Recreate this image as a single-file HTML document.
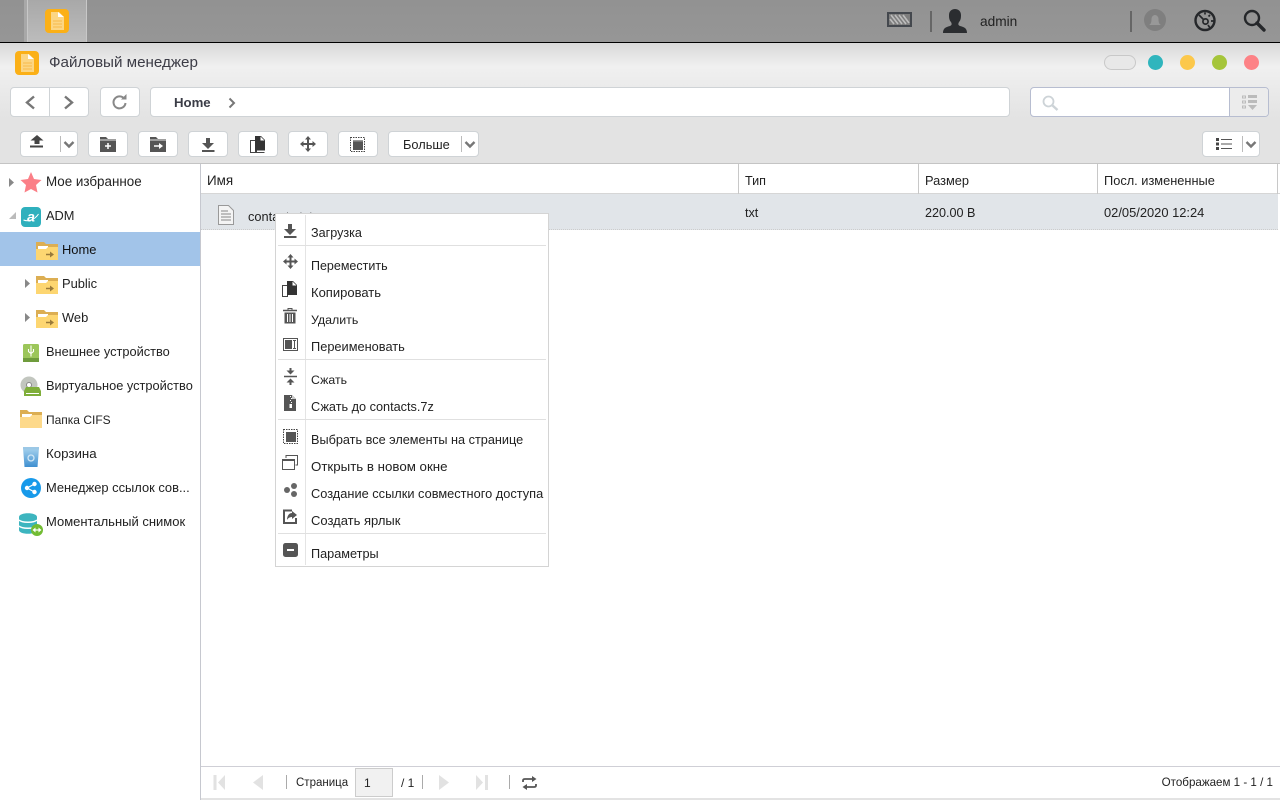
<!DOCTYPE html>
<html><head><meta charset="utf-8"><style>
*{box-sizing:border-box}
html,body{margin:0;padding:0;width:1280px;height:800px;overflow:hidden;background:#fff;font-family:"Liberation Sans","DejaVu Sans",sans-serif;font-size:12.6px;color:#222}
.a{position:absolute}
.t{position:absolute;white-space:nowrap;line-height:16px}
.btn{position:absolute;background:#fff;border:1px solid #cfd3d6;border-radius:4px}
svg{position:absolute;overflow:visible}
</style></head><body>
<!-- top bar -->
<div class="a" style="left:0;top:0;width:1280px;height:42px;background:linear-gradient(#929292,#969696)"></div>
<div class="a" style="left:24px;top:0;width:3px;height:42px;background:#a8a8a8"></div>
<div class="a" style="left:27px;top:0;width:60px;height:42px;background:linear-gradient(#a8a8a8,#bcbcbc);border-left:1px solid #c8c8c8;border-right:1px solid #c8c8c8"></div>
<svg style="left:45px;top:9px" width="24" height="25" viewBox="0 0 24 25"><rect width="24" height="24" rx="4" fill="#fbb017"/><path d="M6 3h8l5 5v13H6z" fill="#fcd684"/><path d="M13 3l6 5h-6z" fill="#fff"/><path d="M8 12h9M8 15h9M8 18h9" stroke="#f7bb4a"/></svg>
<svg style="left:887px;top:12px" width="26" height="15"><rect x="1" y="1" width="23" height="13" fill="#7e7e7e" stroke="#44484e" stroke-width="2"/><path d="M4 3l7 9M8 3l7 9M12 3l7 9M16 3l6 8M3 7l4 5" stroke="#bdbdbd" stroke-width="1.600"/></svg>
<div class="a" style="left:930px;top:11px;width:2px;height:21px;background:#666"></div>
<svg style="left:943px;top:9px" width="24" height="24"><path d="M0 24c0-5 3-6 7-7 2-1 2-2 1-4-2-2-2-5-2-7 0-4 3-6 6-6s6 2 6 6c0 2 0 5-2 7-1 2-1 3 1 4 4 1 7 2 7 7z" fill="#2b2d30"/></svg>
<div class="t" style="left:980px;top:14px;color:#222;font-size:13.7px">admin</div>
<div class="a" style="left:1130px;top:11px;width:2px;height:21px;background:#666"></div>
<svg style="left:1144px;top:9px" width="23" height="23"><circle cx="11" cy="11" r="11" fill="#7f7f7f"/><path d="M5 16c2-1 2.500-3 2.500-6 0-2 1.500-4 3.500-4s3.500 2 3.500 4c0 3 .5 5 2.500 6z" fill="#989898"/></svg>
<svg style="left:1194px;top:9px" width="23" height="23"><circle cx="11" cy="11.500" r="9.500" fill="none" stroke="#25272a" stroke-width="2.400"/><circle cx="11.500" cy="12.500" r="2.600" fill="none" stroke="#25272a" stroke-width="1.700"/><path d="M5 6l5 5M16 19l-2-3M17 12h2.500M11 3.500v2M16 6l-1.500 1.500" stroke="#25272a" stroke-width="1.700"/></svg>
<svg style="left:1243px;top:9px" width="24" height="23"><circle cx="9" cy="9" r="7" fill="none" stroke="#25272a" stroke-width="2.400"/><path d="M14 14l7 7" stroke="#25272a" stroke-width="3.400" stroke-linecap="round"/></svg>
<!-- window -->
<div class="a" style="left:0;top:42px;width:1280px;height:758px;border-top:1px solid #000;background:#e3e3e3"></div>
<div class="a" style="left:0;top:43px;width:1280px;height:75px;background:linear-gradient(#d8d8d8,#f0f0f0 32%,#e3e3e3)"></div>
<svg style="left:15px;top:51px" width="24" height="24" viewBox="0 0 24 24"><rect width="24" height="24" rx="4" fill="#fbb017"/><path d="M6 3h8l5 5v13H6z" fill="#fcd684"/><path d="M13 3l6 5h-6z" fill="#fff"/><path d="M8 12h9M8 15h9M8 18h9" stroke="#f7bb4a"/></svg>
<div class="t" style="left:49px;top:55px;font-size:15.2px;color:#3c3c46">Файловый менеджер</div>
<div class="a" style="left:1104px;top:55px;width:32px;height:15px;border:1px solid #c8c8c8;border-radius:8px;background:#e8e8e8"></div>
<div class="a" style="left:1148px;top:55px;width:15px;height:15px;border-radius:50%;background:#2fb5bd"></div>
<div class="a" style="left:1180px;top:55px;width:15px;height:15px;border-radius:50%;background:#fcc84b"></div>
<div class="a" style="left:1212px;top:55px;width:15px;height:15px;border-radius:50%;background:#a5c53a"></div>
<div class="a" style="left:1244px;top:55px;width:15px;height:15px;border-radius:50%;background:#fd8286"></div>
<!-- nav -->
<div class="btn" style="left:10px;top:87px;width:79px;height:30px"></div>
<div class="a" style="left:49px;top:88px;width:1px;height:28px;background:#cfd3d6"></div>
<svg style="left:24px;top:95px" width="12" height="15"><path d="M10 1.500L3 7.500l7 6" fill="none" stroke="#777" stroke-width="2.400"/></svg>
<svg style="left:63px;top:95px" width="12" height="15"><path d="M2 1.500l7 6-7 6" fill="none" stroke="#777" stroke-width="2.400"/></svg>
<div class="btn" style="left:100px;top:87px;width:40px;height:30px"></div>
<svg style="left:111px;top:94px" width="17" height="16"><path d="M13.500 5A6 6 0 1 0 14.500 9" fill="none" stroke="#888" stroke-width="2"/><path d="M10 5.500h5.500V0z" fill="#888"/></svg>
<div class="btn" style="left:150px;top:87px;width:860px;height:30px"></div>
<div class="t" style="left:174px;top:95px;font-weight:bold;font-size:13.2px;color:#3a3c46">Home</div>
<svg style="left:228px;top:98px" width="8" height="10"><path d="M1.500 0.500l4.500 4.500-4.500 4.500" fill="none" stroke="#777" stroke-width="2"/></svg>
<div class="a" style="left:1030px;top:87px;width:239px;height:30px;background:#fff;border:1px solid #b7bdd0;border-radius:4px"></div>
<div class="a" style="left:1229px;top:88px;width:39px;height:28px;background:#ececec;border-left:1px solid #b7bdd0;border-radius:0 3px 3px 0"></div>
<svg style="left:1042px;top:95px" width="17" height="16"><circle cx="6.500" cy="6.500" r="5" fill="none" stroke="#cdd3d7" stroke-width="1.800"/><path d="M10.500 10.500l5 4.500" stroke="#cdd3d7" stroke-width="2.400"/></svg>
<svg style="left:1242px;top:95px" width="16" height="15"><path d="M0.500 1h3v2h-3zM0.500 6h3v2h-3zM0.500 11h3v2h-3z" fill="none" stroke="#bbb"/><path d="M6 0h9v3H6zM6 5h9v3H6zM6 10h9l-4.500 5z" fill="#bbb"/></svg>
<!-- toolbar -->
<div class="btn" style="left:20px;top:131px;width:58px;height:26px"></div>
<div class="a" style="left:60px;top:136px;width:1px;height:16px;background:#bbb"></div>
<svg style="left:30px;top:135px" width="15" height="14"><path d="M7 0l6.500 5.500H9.500V9h-5V5.500H.5z" fill="#444"/><path d="M0 11.500h13" stroke="#444" stroke-width="2"/></svg>
<svg style="left:64px;top:141px" width="10" height="8"><path d="M.5 1l4.500 4.500L9.500 1" fill="none" stroke="#777" stroke-width="2.400"/></svg>
<div class="btn" style="left:88px;top:131px;width:40px;height:26px"></div>
<svg style="left:100px;top:137px" width="16" height="15"><path d="M0 0h6l2 2h8v13H0z" fill="#555"/><path d="M0 3h16" stroke="#e8e8e8"/><path d="M8 6v6M5 9h6" stroke="#fff" stroke-width="1.500"/></svg>
<div class="btn" style="left:138px;top:131px;width:40px;height:26px"></div>
<svg style="left:150px;top:137px" width="16" height="15"><path d="M0 0h6l2 2h8v13H0z" fill="#555"/><path d="M0 3h16" stroke="#e8e8e8"/><path d="M4 9h7" stroke="#fff" stroke-width="1.500"/><path d="M9 6l4 3-4 3z" fill="#fff"/></svg>
<div class="btn" style="left:188px;top:131px;width:40px;height:26px"></div>
<svg style="left:202px;top:138px" width="13" height="14"><path d="M4 0h4v5h4l-6 6-6-6h4z" fill="#555"/><path d="M0 13h12.500" stroke="#555" stroke-width="2"/></svg>
<div class="btn" style="left:238px;top:131px;width:40px;height:26px"></div>
<svg style="left:250px;top:136px" width="16" height="17"><path d="M.5 4.500h6v12h8" fill="#fff" stroke="#444"/><path d="M.5 4.500h5v12h-5z" fill="#fff" stroke="#444"/><path d="M5 0h6l4 4v10.500H5z" fill="#333"/><path d="M10.500 0.500v4h4z" fill="#fff"/></svg>
<div class="btn" style="left:288px;top:131px;width:40px;height:26px"></div>
<svg style="left:300px;top:136px" width="16" height="16"><path d="M8 0l3 3.500H9V7h3.500V5L16 8l-3.500 3V9H9v3.500h2L8 16l-3-3.500h2V9H3.500v2L0 8l3.500-3v2H7V3.500H5z" fill="#555"/></svg>
<div class="btn" style="left:338px;top:131px;width:40px;height:26px"></div>
<svg style="left:350px;top:137px" width="15" height="15"><rect x="0.500" y="0.500" width="14" height="14" fill="none" stroke="#444" stroke-dasharray="1.500 1"/><rect x="3" y="3" width="10" height="10" fill="#555"/><rect x="3" y="3" width="10" height="1.500" fill="#999"/></svg>
<div class="btn" style="left:388px;top:131px;width:91px;height:26px"></div>
<div class="t" style="left:403px;top:137px;color:#222;font-size:12.8px">Больше</div>
<div class="a" style="left:461px;top:136px;width:1px;height:16px;background:#bbb"></div>
<svg style="left:465px;top:141px" width="10" height="8"><path d="M.5 1l4.500 4.500L9.500 1" fill="none" stroke="#777" stroke-width="2.400"/></svg>
<div class="btn" style="left:1202px;top:131px;width:58px;height:26px"></div>
<div class="a" style="left:1242px;top:136px;width:1px;height:16px;background:#bbb"></div>
<svg style="left:1216px;top:138px" width="16" height="12"><path d="M0 0h3v3H0zM0 4.500h3v3H0zM0 9h3v3H0z" fill="#444"/><path d="M5 1.500h11M5 6h11M5 10.500h11" stroke="#555"/></svg>
<svg style="left:1246px;top:141px" width="10" height="8"><path d="M.5 1l4.500 4.500L9.500 1" fill="none" stroke="#777" stroke-width="2.400"/></svg>
<!-- body -->
<div class="a" style="left:0;top:163px;width:1280px;height:637px;background:#fff;border-top:1px solid #c4c4c4"></div>
<div class="a" style="left:200px;top:164px;width:1px;height:636px;background:#c6c8cf"></div>
<div class="a" style="left:201px;top:193px;width:1079px;height:1px;background:#d6d6d6"></div>
<div class="a" style="left:738px;top:164px;width:1px;height:30px;background:#c8c8c8"></div>
<div class="a" style="left:918px;top:164px;width:1px;height:30px;background:#c8c8c8"></div>
<div class="a" style="left:1097px;top:164px;width:1px;height:30px;background:#c8c8c8"></div>
<div class="a" style="left:1277px;top:164px;width:1px;height:30px;background:#c8c8c8"></div>
<div class="t" style="left:207px;top:173px;font-size:13.4px">Имя</div>
<div class="t" style="left:745px;top:173px">Тип</div>
<div class="t" style="left:925px;top:173px;font-size:12.8px">Размер</div>
<div class="t" style="left:1104px;top:173px;font-size:12.8px">Посл. измененные</div>
<div class="a" style="left:201px;top:194px;width:1077px;height:36px;background:#e1e5e9;border-bottom:1px dotted #ccc"></div>
<svg style="left:218px;top:205px" width="16" height="20"><path d="M0.500 0.500h10l5 5v14H0.500z" fill="#f4f4f4" stroke="#999"/><path d="M3 6h7M3 9h10M3 12h10M3 15h10" stroke="#888"/></svg>
<div class="t" style="left:248px;top:209px;font-size:12.8px">contacts.txt</div>
<div class="t" style="left:745px;top:205px">txt</div>
<div class="t" style="left:925px;top:205px">220.00 B</div>
<div class="t" style="left:1104px;top:205px;font-size:12.9px">02/05/2020 12:24</div>
<!-- sidebar -->
<div class="a" style="left:0;top:232px;width:200px;height:34px;background:#a2c4e9"></div>
<svg style="left:9px;top:178px" width="6" height="9"><path d="M0 0l5 4.500L0 9z" fill="#888"/></svg>
<svg style="left:9px;top:212px" width="8" height="8"><path d="M7 0v7H0z" fill="#bbb"/></svg>
<svg style="left:25px;top:279px" width="6" height="9"><path d="M0 0l5 4.500L0 9z" fill="#888"/></svg>
<svg style="left:25px;top:313px" width="6" height="9"><path d="M0 0l5 4.500L0 9z" fill="#888"/></svg>
<svg style="left:20px;top:172px" width="22" height="21"><path d="M11 0l3 7 7.500 1-5.500 5 1.500 7.500L11 17l-6.500 3.500L6 13 0.500 8 8 7z" fill="#fb7f87"/></svg>
<div class="t" style="left:46px;top:174px;font-size:13.400px">Мое избранное</div>
<svg style="left:21px;top:207px" width="20" height="20"><rect width="20" height="20" rx="4" fill="#2fb0bd"/><text x="10" y="14.500" text-anchor="middle" font-family="Liberation Sans" font-style="italic" font-weight="bold" font-size="14" fill="#fff">a</text><path d="M2.500 13c5 2 11 0 15-6" fill="none" stroke="#fff" stroke-width="1"/></svg>
<div class="t" style="left:46px;top:208px;font-size:12.8px">ADM</div>
<svg style="left:36px;top:242px" width="22" height="18"><path d="M0 0h8l2 2h12v5H0z" fill="#dcae53"/><path d="M2 4h10v3H2z" fill="#fff"/><path d="M0 7h10l2-2h10v13H0z" fill="#fdd671"/><path d="M10 12.500h7" stroke="#9a7a3a" stroke-width="1.500"/><path d="M14 9.500l4 3-4 3z" fill="#9a7a3a"/></svg>
<div class="t" style="left:62px;top:242px;color:#111;font-size:12.9px">Home</div>
<svg style="left:36px;top:276px" width="22" height="18"><path d="M0 0h8l2 2h12v5H0z" fill="#dcae53"/><path d="M2 4h10v3H2z" fill="#fff"/><path d="M0 7h10l2-2h10v13H0z" fill="#fdd671"/><path d="M10 12.500h7" stroke="#9a7a3a" stroke-width="1.500"/><path d="M14 9.500l4 3-4 3z" fill="#9a7a3a"/></svg>
<div class="t" style="left:62px;top:276px;font-size:12.9px">Public</div>
<svg style="left:36px;top:310px" width="22" height="18"><path d="M0 0h8l2 2h12v5H0z" fill="#dcae53"/><path d="M2 4h10v3H2z" fill="#fff"/><path d="M0 7h10l2-2h10v13H0z" fill="#fdd671"/><path d="M10 12.500h7" stroke="#9a7a3a" stroke-width="1.500"/><path d="M14 9.500l4 3-4 3z" fill="#9a7a3a"/></svg>
<div class="t" style="left:62px;top:310px;font-size:12.9px">Web</div>
<svg style="left:23px;top:344px" width="16" height="19"><rect width="16" height="18" rx="1.500" fill="#9cc65a"/><rect y="14" width="16" height="4" fill="#6f9c3c"/><path d="M8 1.500v11M5.500 5v2.500L8 9.500l2.500-2V5" fill="none" stroke="#fff" stroke-width="1.100"/></svg>
<div class="t" style="left:46px;top:344px;font-size:12.8px">Внешнее устройство</div>
<svg style="left:20px;top:376px" width="22" height="21"><circle cx="9" cy="9" r="8.500" fill="#c2c6bf"/><circle cx="9" cy="9" r="2.500" fill="#fff" stroke="#888"/><path d="M4 15l2-4h13l2 4v5H4z" fill="#7fae3a"/><path d="M6 17.500h13" stroke="#fff"/></svg>
<div class="t" style="left:46px;top:378px;font-size:12.8px">Виртуальное устройство</div>
<svg style="left:20px;top:410px" width="22" height="18"><path d="M0 0h7l2 2h13v5H0z" fill="#dcae53"/><path d="M2 4h10v3H2z" fill="#fff"/><path d="M0 7h10l2-2h10v13H0z" fill="#fdd98a"/></svg>
<div class="t" style="left:46px;top:412px;font-size:12px">Папка CIFS</div>
<svg style="left:23px;top:447px" width="16" height="20"><defs><linearGradient id="g" x1="0" y1="0" x2="0" y2="1"><stop offset="0" stop-color="#a6d2ee"/><stop offset="1" stop-color="#3f8fd0"/></linearGradient></defs><path d="M0 1h16L14.500 20h-13z" fill="url(#g)"/><path d="M0 0h16v2.500H0z" fill="#9cc8e6"/><circle cx="8" cy="11" r="3" fill="none" stroke="#cfe6f5" stroke-width="1.300"/></svg>
<div class="t" style="left:46px;top:446px;font-size:13.3px">Корзина</div>
<svg style="left:21px;top:478px" width="20" height="20"><circle cx="10" cy="10" r="10" fill="#189aea"/><circle cx="6" cy="10" r="2.200" fill="#fff"/><circle cx="13.500" cy="6" r="2.200" fill="#fff"/><circle cx="13.500" cy="14" r="2.200" fill="#fff"/><path d="M6 10l7.500-4M6 10l7.500 4" stroke="#fff" stroke-width="1.200"/></svg>
<div class="t" style="left:46px;top:480px;font-size:12.9px">Менеджер ссылок сов...</div>
<svg style="left:19px;top:512px" width="24" height="24"><path d="M0 5c0-5 18-5 18 0v13c0 5-18 5-18 0z" fill="#3db5bf"/><path d="M0 8c3 3 15 3 18 0M0 14c3 3 15 3 18 0" fill="none" stroke="#fff" stroke-width="1.500"/><circle cx="18" cy="18" r="6" fill="#72bc33"/><path d="M15 18h6" stroke="#fff" stroke-width="1.200"/><path d="M16.500 15.500v5L13.500 18zM19.500 15.500v5L22.500 18z" fill="#fff"/></svg>
<div class="t" style="left:46px;top:514px;font-size:13px">Моментальный снимок</div>
<!-- context menu -->
<div class="a" style="left:275px;top:213px;width:274px;height:354px;background:#fff;border:1px solid #d4d4d4"></div>
<div class="a" style="left:305px;top:215px;width:1px;height:350px;background:#e4e4e4"></div>
<div class="a" style="left:278px;top:245px;width:268px;height:1px;background:#e0e0e0"></div>
<div class="a" style="left:278px;top:359px;width:268px;height:1px;background:#e0e0e0"></div>
<div class="a" style="left:278px;top:419px;width:268px;height:1px;background:#e0e0e0"></div>
<div class="a" style="left:278px;top:533px;width:268px;height:1px;background:#e0e0e0"></div>
<div class="t" style="left:311px;top:225px">Загрузка</div>
<div class="t" style="left:311px;top:258px;font-size:12.500px">Переместить</div>
<div class="t" style="left:311px;top:285px;font-size:13px">Копировать</div>
<div class="t" style="left:311px;top:312px;font-size:12.400px">Удалить</div>
<div class="t" style="left:311px;top:339px;font-size:12.800px">Переименовать</div>
<div class="t" style="left:311px;top:372px;font-size:12.300px">Сжать</div>
<div class="t" style="left:311px;top:399px;font-size:12.700px">Сжать до contacts.7z</div>
<div class="t" style="left:311px;top:432px;font-size:12.700px">Выбрать все элементы на странице</div>
<div class="t" style="left:311px;top:459px;font-size:13.300px">Открыть в новом окне</div>
<div class="t" style="left:311px;top:486px;font-size:12.800px">Создание ссылки совместного доступа</div>
<div class="t" style="left:311px;top:513px;font-size:13px">Создать ярлык</div>
<div class="t" style="left:311px;top:546px;font-size:12.700px">Параметры</div>
<svg style="left:284px;top:224px" width="13" height="14"><path d="M4 0h4v5h4l-6 6-6-6h4z" fill="#555"/><path d="M0 13h12.500" stroke="#555" stroke-width="2"/></svg>
<svg style="left:283px;top:254px" width="15" height="15"><path d="M7.500 0l3 3.500H8.500V6.500h3V4.500L15 7.500l-3.500 3V8.500h-3v3h2l-3 3.500-3-3.500h2v-3h-3v2L0 7.500l3.500-3v2h3v-3h-2z" fill="#555"/></svg>
<svg style="left:282px;top:281px" width="16" height="16"><path d="M.5 4.500h5v11h-5z" fill="#fff" stroke="#444"/><path d="M5 0h6l4 4v10H5z" fill="#333"/><path d="M10.500 0.500v4h4z" fill="#fff"/></svg>
<svg style="left:283px;top:308px" width="14" height="16"><path d="M0 2.500h14" stroke="#555" stroke-width="1.500"/><path d="M5 2V0.500h4V2" fill="none" stroke="#555"/><path d="M1.500 4.500h11V15.500h-11z" fill="#555"/><path d="M4.500 6v8M7 6v8M9.500 6v8" stroke="#fff"/></svg>
<svg style="left:283px;top:338px" width="15" height="13"><rect x="0.500" y="0.500" width="14" height="12" fill="none" stroke="#555"/><rect x="2" y="2" width="7" height="9" fill="#555"/><path d="M10 2.500h3M10 10.500h3M11.500 2.500v8" stroke="#555"/></svg>
<svg style="left:284px;top:368px" width="13" height="17"><path d="M0 8.500h13" stroke="#555" stroke-width="1.500"/><path d="M6.500 6.500L2.500 2.500h3V0h2v2.500h3zM6.500 10.500l4 4h-3V17h-2v-2.500h-3z" fill="#555"/></svg>
<svg style="left:284px;top:395px" width="12" height="16"><path d="M0 0h8l4 4v12H0z" fill="#555"/><path d="M8 0l4 4H8z" fill="#ccc"/><path d="M6 1h1v1H6zM7 3h1v1H7zM6 5h1v1H6zM7 7h1v1H7zM5.500 9h2.500v4H5.500z" fill="#fff"/></svg>
<svg style="left:283px;top:429px" width="15" height="15"><rect x="0.500" y="0.500" width="14" height="14" fill="none" stroke="#444" stroke-dasharray="1.500 1"/><rect x="3" y="3" width="10" height="10" fill="#555"/></svg>
<svg style="left:282px;top:455px" width="16" height="15"><path d="M4 3V0.500h11.500V10H13.500" fill="none" stroke="#555"/><rect x="0.500" y="4.500" width="12" height="10" fill="#fff" stroke="#555"/><path d="M0.500 4.500h12v1.500h-12z" fill="#555"/></svg>
<svg style="left:284px;top:483px" width="13" height="14"><circle cx="3" cy="7" r="3" fill="#666"/><circle cx="10" cy="3" r="3" fill="#666"/><circle cx="10" cy="11" r="3" fill="#666"/></svg>
<svg style="left:283px;top:509px" width="15" height="15"><path d="M9 1.500H1v12.500h12V9" fill="none" stroke="#555" stroke-width="2"/><path d="M9 2v2C6 4 4 7 4 11c1-2 3-3 5-3v2l5-4z" fill="#555"/></svg>
<svg style="left:283px;top:543px" width="15" height="14"><rect width="15" height="14" rx="2.500" fill="#555"/><path d="M4 7h7" stroke="#fff" stroke-width="2"/></svg>
<!-- footer -->
<div class="a" style="left:201px;top:766px;width:1079px;height:1px;background:#cfcfd6"></div>
<div class="a" style="left:201px;top:798px;width:1079px;height:2px;background:#e3e3e3"></div>
<svg style="left:213px;top:775px" width="14" height="15"><path d="M0.500 0h3v15h-3z" fill="#e2e2e2"/><path d="M12 0v15L5 7.500z" fill="#e2e2e2"/></svg>
<svg style="left:252px;top:775px" width="12" height="15"><path d="M11 0v15L1 7.500z" fill="#e2e2e2"/></svg>
<div class="a" style="left:286px;top:775px;width:1px;height:14px;background:#aaa"></div>
<div class="t" style="left:296px;top:775px;font-size:11.500px">Страница</div>
<div class="a" style="left:355px;top:768px;width:38px;height:29px;background:#f1f1f1;border:1px solid #ccc"></div>
<div class="t" style="left:364px;top:775px;font-size:12px">1</div>
<div class="t" style="left:401px;top:775px;font-size:12px">/ 1</div>
<div class="a" style="left:422px;top:775px;width:1px;height:14px;background:#aaa"></div>
<svg style="left:438px;top:775px" width="12" height="15"><path d="M1 0v15l10-7.500z" fill="#e2e2e2"/></svg>
<svg style="left:475px;top:775px" width="14" height="15"><path d="M1 0v15l7-7.500z" fill="#e2e2e2"/><path d="M10 0h3v15h-3z" fill="#e2e2e2"/></svg>
<div class="a" style="left:509px;top:775px;width:1px;height:14px;background:#aaa"></div>
<svg style="left:522px;top:776px" width="15" height="14"><path d="M1 6V4.500Q1 3 3 3h8M14 8v1.500q0 1.500-2 1.500H4" fill="none" stroke="#555" stroke-width="1.800"/><path d="M10 0l4.500 3L10 6zM5 8L.5 11 5 14z" fill="#555"/></svg>
<div class="t" style="right:7px;top:775px;font-size:11.600px">Отображаем 1 - 1 / 1</div>
</body></html>
